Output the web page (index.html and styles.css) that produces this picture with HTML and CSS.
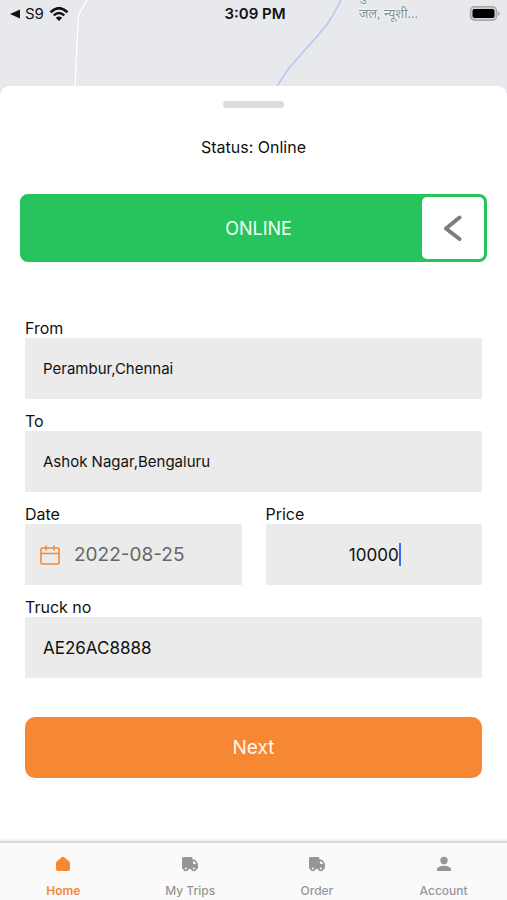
FILE: index.html
```
<!DOCTYPE html>
<html lang="en">
<head>
<meta charset="utf-8">
<meta name="viewport" content="width=device-width, initial-scale=1">
<title>Truck trips</title>
<link rel="stylesheet" href="styles.css">
</head>
<body>
<div class="app">
  <header class="map">
    <svg class="map-lines" width="507" height="100" viewBox="0 0 507 100" fill="none" aria-hidden="true">
      <path d="M87 0 80 12Q78 16 78 22L75 88" stroke="#dfe1e5" stroke-width="2.600"/>
      <path d="M87 0 80 12Q78 16 78 22L75 88" stroke="#fff" stroke-width="1.600"/>
      <path d="M341 0 Q335 13 326 26L290 67Q284 75 276 88" stroke="#b3c9f5" stroke-width="1.600"/>
    </svg>
    <div class="map-label" lang="hi"><span>गुरु</span><span>जल, न्यूशी...</span></div>
    <div class="status-bar">
      <div class="status-left">
        <svg width="10" height="10" viewBox="0 0 10 10" aria-hidden="true"><path d="M0 5 10 .5V9.500Z" fill="#111"/></svg>
        <span>S9</span>
        <svg width="20" height="14" viewBox="0 0 20 14" fill="none" aria-hidden="true">
          <path d="M1.500 5.200Q10-2.800 18.500 5.200" stroke="#111" stroke-width="2.600"/>
          <path d="M4.700 8.400Q10 3.600 15.300 8.400" stroke="#111" stroke-width="2.400"/>
          <path d="M10 14 6.800 10.800Q10 8.200 13.200 10.800Z" fill="#111"/>
        </svg>
      </div>
      <time class="clock">3:09 PM</time>
      <svg class="battery" width="31" height="15" viewBox="0 0 31 15" aria-hidden="true">
        <rect x="1.500" y=".8" width="26" height="13.400" rx="4" fill="#d0d1d3" stroke="#a5a6a8" stroke-width="1.400"/>
        <rect x="3.500" y="3" width="22" height="9" rx="2" fill="#000"/>
        <path d="M28.800 5Q30.800 6 30.800 7.500T28.800 10Z" fill="#a5a6a8"/>
      </svg>
    </div>
  </header>

  <main class="sheet">
    <div class="handle"></div>
    <p class="status">Status: Online</p>
    <button class="toggle" type="button" aria-label="Go offline">
      <span class="toggle-text">ONLINE</span>
      <span class="toggle-thumb">
        <svg width="20" height="26" viewBox="0 0 20 26" fill="none" aria-hidden="true"><path d="M16.500 2.500 3 13.500 16.500 24" stroke="#7d7d7d" stroke-width="4" stroke-linecap="round" stroke-linejoin="round"/></svg>
      </span>
    </button>

    <form class="form">
      <div class="field">
        <label for="from">From</label>
        <input id="from" class="place" type="text" value="Perambur,Chennai">
      </div>
      <div class="field">
        <label for="to">To</label>
        <input id="to" class="place" type="text" value="Ashok Nagar,Bengaluru">
      </div>
      <div class="row">
        <div class="field">
          <label for="date">Date</label>
          <div class="date-box">
            <svg width="20" height="20" viewBox="0 0 20 20" fill="none" stroke="#f58a35" stroke-width="1.600" stroke-linecap="round" stroke-linejoin="round" aria-hidden="true">
              <rect x="1" y="3" width="18" height="16" rx="1.500"/><path d="M1 8.500H19M6 1V5M14 1V5"/>
            </svg>
            <input id="date" type="text" value="2022-08-25">
          </div>
        </div>
        <div class="field">
          <label for="price">Price</label>
          <div class="price-box">
            <input id="price" type="text" inputmode="numeric" value="10000">
            <span class="caret"></span>
          </div>
        </div>
      </div>
      <div class="field">
        <label for="truck">Truck no</label>
        <input id="truck" type="text" value="AE26AC8888">
      </div>
      <button class="next" type="button">Next</button>
    </form>
  </main>

  <nav class="tabs">
    <a class="tab active" href="#home">
      <svg width="16" height="16" viewBox="0 0 16 16" aria-hidden="true"><path d="M6.700 1.300Q8 .2 9.300 1.300L14 5.200Q15 6 15 7.300V13Q15 15 13 15H3Q1 15 1 13V7.300Q1 6 2 5.200Z" fill="currentColor"/></svg>
      <span>Home</span>
    </a>
    <a class="tab" href="#trips">
      <svg width="18" height="16" viewBox="0 0 18 16" aria-hidden="true"><path d="M2.500 1H10Q11.500 1 11.500 2.500V3.500H13Q14 3.500 14.700 4.300L16.500 7Q17 7.800 17 9V12Q17 13 16 13H2Q1 13 1 12V2.500Q1 1 2.500 1Z" fill="currentColor"/><path d="M12.200 5.200H13.300L15.200 8H12.200Z" fill="#fafafa"/><circle cx="4.800" cy="12.500" r="1.900" fill="#fafafa" stroke="currentColor" stroke-width="1.800"/><circle cx="12.800" cy="12.500" r="1.900" fill="#fafafa" stroke="currentColor" stroke-width="1.800"/></svg>
      <span>My Trips</span>
    </a>
    <a class="tab" href="#order">
      <svg width="18" height="16" viewBox="0 0 18 16" aria-hidden="true"><path d="M2.500 1H10Q11.500 1 11.500 2.500V3.500H13Q14 3.500 14.700 4.300L16.500 7Q17 7.800 17 9V12Q17 13 16 13H2Q1 13 1 12V2.500Q1 1 2.500 1Z" fill="currentColor"/><path d="M12.200 5.200H13.300L15.200 8H12.200Z" fill="#fafafa"/><circle cx="4.800" cy="12.500" r="1.900" fill="#fafafa" stroke="currentColor" stroke-width="1.800"/><circle cx="12.800" cy="12.500" r="1.900" fill="#fafafa" stroke="currentColor" stroke-width="1.800"/></svg>
      <span>Order</span>
    </a>
    <a class="tab" href="#account">
      <svg width="16" height="16" viewBox="0 0 16 16" fill="currentColor" aria-hidden="true"><circle cx="8" cy="4.500" r="3.700"/><path d="M1 15V13.300C1 11 5 9.800 8 9.800S15 11 15 13.300V15Z"/></svg>
      <span>Account</span>
    </a>
  </nav>
</div>
</body>
</html>
```
FILE: styles.css
```
* { box-sizing: border-box; }

body {
  margin: 0;
  background: #fff;
  color: #111;
  font-family: Inter, "Liberation Sans", sans-serif;
  font-size: 16px;
}

button, input { font: inherit; color: inherit; }
button { border: 0; cursor: pointer; }

.app {
  min-height: 100vh;
  display: flex;
  flex-direction: column;
}

.map {
  position: relative;
  height: 86px;
  background: #e8e9ed;
}

.map-lines { position: absolute; top: 0; left: 0; }

.map-label {
  position: absolute;
  top: -14px;
  right: 89px;
  display: flex;
  flex-direction: column;
  color: #7d9094;
  font-family: "Noto Sans", "Noto Sans Devanagari", sans-serif;
  font-size: 13px;
  line-height: 18px;
  text-shadow: 0 0 2px #fff, 0 0 2px #fff, 0 0 2px #fff;
}

.status-bar {
  position: relative;
  display: grid;
  grid-template-columns: 1fr auto 1fr;
  align-items: center;
  height: 27px;
  padding: 0 7px 0 10px;
}

.status-left {
  display: flex;
  align-items: center;
  gap: 5px;
  font-size: 15px;
}

.clock { font-size: 15px; font-weight: 600; }
.battery { justify-self: end; }

.sheet {
  position: relative;
  flex: 1;
  padding: 15px 20px 24px;
  background: #fff;
}

.sheet::before {
  content: "";
  position: absolute;
  inset: 0 0 auto;
  height: 10px;
  background: radial-gradient(circle at 10px 10px, #fff 10px, #e8e9ed 10px) left / 10px 10px no-repeat,
    radial-gradient(circle at 0 10px, #fff 10px, #e8e9ed 10px) right / 10px 10px no-repeat;
}

.handle {
  width: 61px;
  height: 7px;
  margin: 0 auto;
  border-radius: 4px;
  background: #dcdcdc;
}

.status {
  margin: 28px 0 36px;
  line-height: 22px;
  text-align: center;
}

.toggle {
  position: relative;
  display: flex;
  align-items: center;
  justify-content: center;
  width: 100%;
  height: 68px;
  padding: 0 0 0 10px;
  border-radius: 8px;
  background: #27c45d;
  color: #f0fff4;
}

.toggle-text { font-size: 18px; }

.toggle-thumb {
  position: absolute;
  inset: 3px 3px 3px auto;
  width: 62px;
  display: grid;
  place-items: center;
  border-radius: 5px;
  background: #fff;
}

.form { padding: 44px 5px 0; }

.field {
  display: flex;
  flex-direction: column;
  flex: 1;
  min-width: 0;
  padding-top: 12px;
}

.field label { line-height: 20px; }

.field input {
  width: 100%;
  height: 61px;
  padding: 0 18px;
  border: 0;
  border-radius: 1px;
  outline: 0;
  background: #ebebeb;
  font-size: 17px;
}

.field .place { font-size: 15px; }

.row { display: flex; gap: 24px; }

.date-box {
  display: flex;
  align-items: center;
  gap: 14px;
  padding-left: 15px;
  background: #ebebeb;
}

.date-box svg { flex: none; }

.field .date-box input {
  padding: 0;
  color: #666;
  font-size: 19px;
}

.price-box { position: relative; }
.price-box input { text-align: center; }

.caret {
  position: absolute;
  top: 19px;
  left: calc(50% + 25px);
  width: 2px;
  height: 23px;
  background: #4169e8;
}

.next {
  width: 100%;
  height: 61px;
  margin-top: 39px;
  padding: 0;
  border-radius: 10px;
  background: #f68834;
  color: #fff7ee;
  font-size: 19px;
}

.tabs {
  position: relative;
  display: flex;
  height: 59px;
  border-top: 2px solid #d9d9d9;
  background: #fafafa;
  box-shadow: 0 -1px 2px #e4e4e4;
}

.tab {
  flex: 1;
  display: flex;
  flex-direction: column;
  align-items: center;
  gap: 11px;
  padding-top: 13px;
  color: #969696;
  font-size: 12px;
  line-height: 16px;
  text-decoration: none;
}

.tab span { font-weight: 500; }
.tab.active { color: #f68834; }
.tab.active span { font-weight: 600; }
```
